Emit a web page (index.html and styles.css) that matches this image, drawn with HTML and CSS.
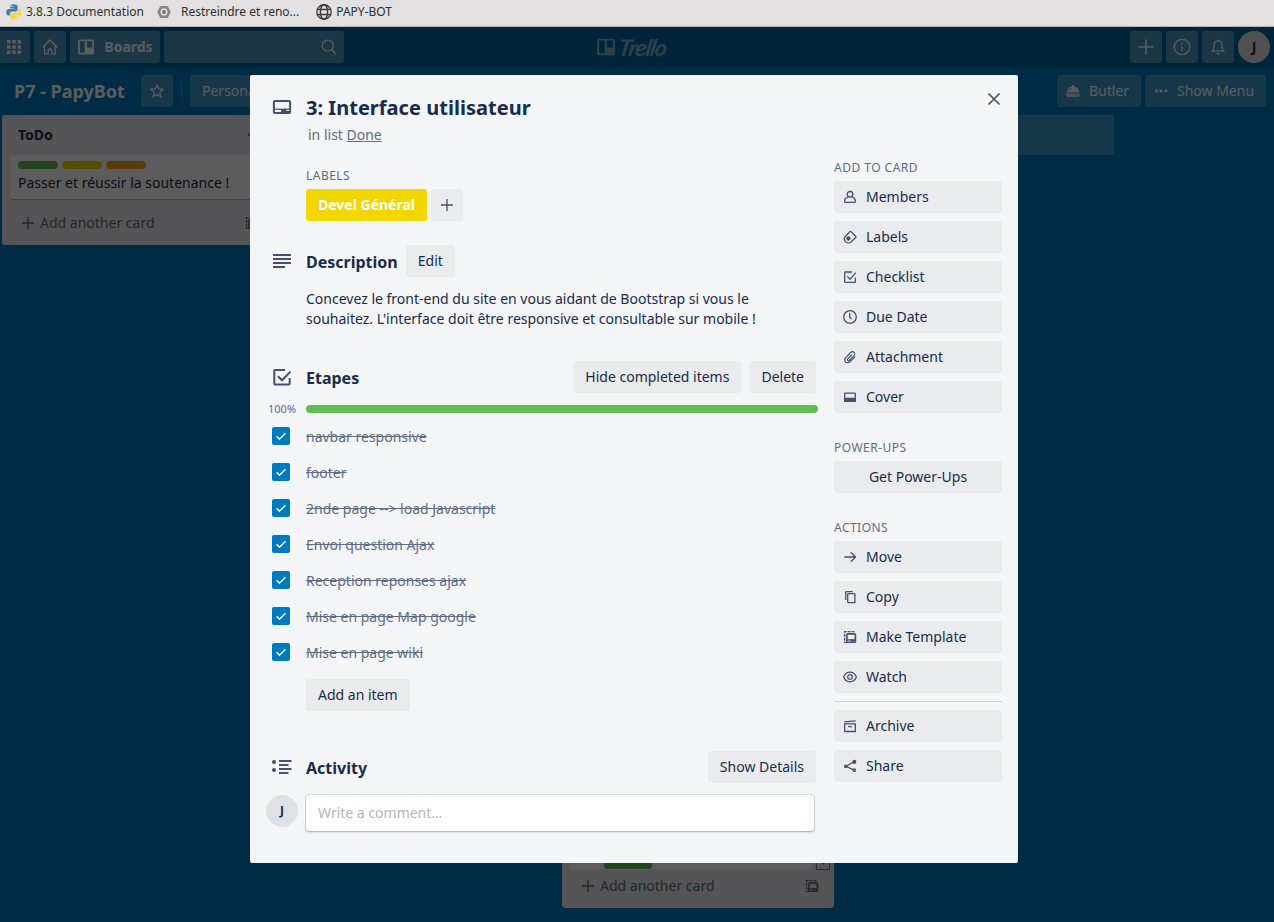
FILE: index.html
```html
<!DOCTYPE html>
<html lang="fr">
<head>
<meta charset="utf-8">
<title>P7 - PapyBot | Trello</title>
<link rel="stylesheet" href="styles.css">
</head>
<body>
<svg class="sprite" aria-hidden="true">
  <symbol id="i-plus" viewBox="0 0 16 16"><path d="M8 2v12M2 8h12"/></symbol>
  <symbol id="i-close" viewBox="0 0 16 16"><path d="M2.500 2.500l11 11M13.500 2.500l-11 11"/></symbol>
  <symbol id="i-member" viewBox="0 0 16 16"><circle cx="8" cy="5.300" r="2.800"/><path d="M5.700 8.100C3.800 8.700 2.700 10 2.700 11.600v.9q0 .9.900.9h8.800q.9 0 .9-.9v-.9c0-1.600-1.100-2.900-3-3.500"/></symbol>
  <symbol id="i-label" viewBox="0 0 16 16"><path d="M7.700 2.700q.7-.6 1.400 0l4.600 4.500q.6.700 0 1.300l-4.400 4.200c-2 1.700-4.700 1.300-6-.200-1.300-1.600-1.200-3.800.3-5.200z"/><circle class="solid" cx="6.400" cy="9.500" r="1.500"/></symbol>
  <symbol id="i-check" viewBox="0 0 16 16"><path d="M10 3H3.300q-.6 0-.6.600v9.200q0 .6.600.600h9.400q.6 0 .6-.600V8.500M5.300 7.400l2.800 2.900 5.700-6.600"/></symbol>
  <symbol id="i-clock" viewBox="0 0 16 16"><circle cx="8" cy="8" r="6.300"/><path d="M7.700 4v4.300l1.800 1.800"/></symbol>
  <symbol id="i-clip" viewBox="0 0 16 16"><path d="M13 7.600L8.200 12.500c-1.500 1.500-3.600 1.500-4.700.3s-1-3.100.4-4.500L8.700 3.500c1-1 2.500-1 3.400-.1s.9 2.300-.1 3.300L7.500 11.200c-.5.5-1.300.5-1.700.1s-.4-1.100.1-1.600L9.900 5.600"/></symbol>
  <symbol id="i-cover" viewBox="0 0 16 16"><rect x="2.700" y="4.100" width="10.600" height="8.200" rx=".7"/><path class="solid" d="M2.700 9.300h10.600v3H2.700z"/></symbol>
  <symbol id="i-arrow" viewBox="0 0 16 16"><path d="M2.300 8h11.200M8.800 3.300L13.500 8l-4.700 4.700"/></symbol>
  <symbol id="i-copy" viewBox="0 0 16 16"><rect x="5.700" y="4.700" width="7.200" height="8.900" rx=".7"/><path d="M3.700 11V3.400q0-.7.700-.7h6.300"/></symbol>
  <symbol id="i-template" viewBox="0 0 16 16"><rect x="4.900" y="4.900" width="8.500" height="8.400" rx=".9" stroke-width="1.600"/><path d="M5 10.900h8.500"/><path class="fill" d="M8.500 10.500h4v2h-4z"/><path class="dash" d="M12.500 2.600H2.600v10.800H5"/></symbol>
  <symbol id="i-eye" viewBox="0 0 16 16"><path d="M1.600 8C3 4.700 5.400 3.200 8 3.200S13 4.700 14.400 8C13 11.300 10.600 12.800 8 12.800S3 11.300 1.600 8z"/><circle cx="8" cy="8" r="2.300"/></symbol>
  <symbol id="i-archive" viewBox="0 0 16 16"><path d="M2.700 5.900h10.600v7.600H2.700zM2.300 3.800l11.400-1M6.200 8.700h3.600"/></symbol>
  <symbol id="i-share" viewBox="0 0 16 16"><path d="M12 4L4 8.300l8 3.800"/><circle class="solid" cx="12.300" cy="3.900" r="1.400"/><circle cx="3.700" cy="8.300" r="1.200"/><circle cx="12.300" cy="12.200" r="1.200"/></symbol>
  <symbol id="i-home" viewBox="0 0 18 18"><path d="M1.800 9.300L9 2l7.200 7.300M3.600 8v7.800h3.700v-3.500q0-1.500 1.700-1.500t1.700 1.500v3.500h3.700V8"/></symbol>
  <symbol id="i-board" viewBox="0 0 18 18"><path class="fill" fill-rule="evenodd" d="M2.500 1.500h13q1.500 0 1.500 1.500v12q0 1.500-1.500 1.500h-13Q1 16.500 1 15V3q0-1.500 1.500-1.500zM2.900 3.200v11.500h4.900V3.200zM10 3.200v6.300h5.200V3.200z"/></symbol>
</svg>

<div class="bookmarks">
  <span class="bookmark python">
    <svg width="16" height="16" viewBox="0 0 16 16"><path fill="#3f7cac" d="M7.800.3C4.600.3 4.300 1.500 4.300 3v1.500h4v.6H2.800C.9 5.100.3 6.700.3 8.300s.6 3.200 2.300 3.200h1.300V9.600c0-1.200 1-2.200 2.200-2.200h3.700c1 0 1.800-.8 1.800-1.800V2.500C11.600 1 10 .3 7.800.3z"/><path fill="#fbd53d" d="M8.200 15.800c3.200 0 3.500-1.200 3.500-2.700v-1.500h-4V11h5.500c1.900 0 2.500-1.600 2.500-3.200S15.100 5 13.400 5h-1.300v1.900c0 1.200-1 2.200-2.200 2.200H6.200c-1 0-1.800.8-1.800 1.800v2.700c0 1.500 1.600 2.200 3.800 2.200z"/><circle cx="5.900" cy="2.200" r=".7" fill="#fff"/><circle cx="10.100" cy="14" r=".7" fill="#fff"/></svg>
    3.8.3 Documentation</span>
  <span class="bookmark cloud">
    <svg width="14" height="14" viewBox="0 0 14 14"><path fill="none" stroke="#858585" stroke-width="2.600" stroke-linejoin="round" d="M4.200 2.200h5.600L12.300 7l-2.500 4.800H4.200L1.700 7z"/><circle cx="7" cy="7" r="2" fill="#777"/></svg>
    Restreindre et reno...</span>
  <span class="bookmark globe">
    <svg width="16" height="16" viewBox="0 0 16 16" fill="none" stroke="#3d3b3c" stroke-width="1.400"><circle cx="8" cy="8" r="7.200"/><ellipse cx="8" cy="8" rx="3.600" ry="7.200"/><path d="M1.500 5.500h13M1.500 10.500h13"/></svg>
    PAPY-BOT</span>
</div>

<div class="app">
  <header class="topbar">
    <div class="hbtn apps"><svg width="14" height="14" viewBox="0 0 14 14"><path class="fill" d="M0 0h3.500v3.500H0zM5.250 0h3.500v3.500h-3.500zM10.500 0H14v3.500h-3.500zM0 5.250h3.500v3.500H0zM5.250 5.250h3.500v3.500h-3.500zM10.500 5.250H14v3.500h-3.500zM0 10.500h3.500V14H0zM5.250 10.500h3.500V14h-3.500zM10.500 10.500H14V14h-3.500z"/></svg></div>
    <div class="hbtn"><svg class="ico" width="18" height="18"><use href="#i-home"/></svg></div>
    <div class="hbtn boards"><svg class="ico" width="18" height="18"><use href="#i-board"/></svg>Boards</div>
    <div class="hbtn search"><svg class="ico" width="16" height="16" viewBox="0 0 16 16"><circle cx="6.800" cy="6.700" r="5.500"/><path d="M10.700 10.700l4.500 4.500"/></svg></div>
    <div class="logo"><svg class="ico" width="20" height="20" viewBox="0 0 18 18"><use href="#i-board"/></svg><span>Trello</span></div>
    <div class="spacer"></div>
    <div class="hbtn"><svg class="ico" width="20" height="20"><use href="#i-plus"/></svg></div>
    <div class="hbtn"><svg class="ico" width="18" height="18" viewBox="0 0 18 18"><circle cx="9" cy="9" r="7.700"/><path d="M9 8v5M9 4.800v1.700"/></svg></div>
    <div class="hbtn"><svg class="ico" width="16" height="16" viewBox="0 0 16 16"><path d="M2.200 12.200c1.300-1.200 1.800-2 1.800-4V5.800a4 4 0 0 1 8 0v2.400c0 2 .5 2.800 1.800 4zM8 .5v1.300"/><path class="fill" d="M6 14h4l-2 2z"/></svg></div>
    <div class="avatar">J</div>
  </header>

  <div class="boardbar">
    <h1>P7 - PapyBot</h1>
    <div class="bbtn star"><svg class="ico" width="14" height="14" viewBox="0 0 14 14"><path d="M7 1l1.800 4 4.300.4-3.200 2.900.9 4.300L7 10.400l-3.800 2.200.9-4.300L.9 5.400 5.200 5z"/></svg></div>
    <i class="divider"></i>
    <div class="bbtn personal">Personal</div>
    <div class="spacer"></div>
    <div class="bbtn butler"><svg width="14" height="12" viewBox="0 0 14 12"><path class="fill" fill-rule="evenodd" d="M6 0h2v1.400C11 1.800 13 4 13.300 7.500H.7C1 4 3 1.800 6 1.400zM2.500 6C3 4.300 4 3.300 5.700 2.800l.2.800C4.500 4.100 3.700 4.900 3.300 6z"/><path class="fill" opacity=".75" d="M0 8.500h14v1L13 12H1L0 9.500z"/></svg>Butler</div>
    <div class="bbtn menu"><svg width="14" height="4" viewBox="0 0 14 4"><path class="fill" d="M1 .6h2.700v2.700H1zM5.700.6h2.700v2.700H5.700zM10.400.6h2.700v2.700h-2.700z"/></svg>Show Menu</div>
  </div>

  <div class="lists">
    <section class="list">
      <div class="list-head"><h2>ToDo</h2><svg width="14" height="4" viewBox="0 0 14 4"><path class="fill" d="M1 .6h2.700v2.700H1zM5.700.6h2.700v2.700H5.700zM10.400.6h2.700v2.700h-2.700z"/></svg></div>
      <article class="card">
        <div class="tags"><i class="green"></i><i class="yellow"></i><i class="orange"></i></div>
        Passer et réussir la soutenance !
      </article>
      <div class="add-card"><svg class="ico" width="16" height="16"><use href="#i-plus"/></svg>Add another card<svg class="ico tpl" width="16" height="16"><use href="#i-template"/></svg></div>
    </section>
    <section class="list gap"></section>
    <section class="list tall">
      <div class="stack"><div class="last-card"><i class="green"></i></div><div class="scroll">▾</div></div>
      <div class="add-card"><svg class="ico" width="16" height="16"><use href="#i-plus"/></svg>Add another card<svg class="ico tpl" width="16" height="16"><use href="#i-template"/></svg></div>
    </section>
    <div class="new-list"></div>
  </div>
</div>

<div class="overlay">
  <div class="dialog" role="dialog">
    <svg class="ico close" width="16" height="16"><use href="#i-close"/></svg>
    <div class="title-row">
      <svg class="ico head-ico" width="20" height="16" viewBox="0 0 20 16"><rect x="1.900" y="1.900" width="16.200" height="12.200" rx="1.200"/><path class="thin" d="M2 10.200h16"/><path class="fill" d="M9 10h5.500v2H18v2H9z"/></svg>
      <div><h2>3: Interface utilisateur</h2><p>in list <a>Done</a></p></div>
    </div>
    <div class="columns">
      <main>
        <div class="labels"><h4>LABELS</h4><div class="row"><span class="chip">Devel Général</span><span class="btn square"><svg class="ico" width="16" height="16"><use href="#i-plus"/></svg></span></div></div>

        <div class="head description">
          <svg class="ico head-ico" width="20" height="16" viewBox="0 0 20 16"><path d="M1 1.900h18M1 5.900h18M1 9.900h18M1 13.900h12"/></svg>
          <h3>Description</h3><span class="btn">Edit</span>
        </div>
        <p class="text">Concevez le front-end du site en vous aidant de Bootstrap si vous le souhaitez. L'interface doit être responsive et consultable sur mobile !</p>

        <div class="head">
          <svg class="ico head-ico" width="20" height="18" viewBox="0 0 20 18"><path d="M13 2H3.200q-.9 0-.9.900v12.600q0 .9.900.9h13.600q.9 0 .9-.9V10M6 8.300l4 4 8.500-8.700"/></svg>
          <h3>Etapes</h3><div class="spacer"></div><span class="btn">Hide completed items</span><span class="btn">Delete</span>
        </div>
        <div class="progress"><span>100%</span><div class="track"></div></div>
        <ul class="items">
          <li><i class="box"><svg width="12" height="12" viewBox="0 0 12 12"><path d="M1.500 6.300l3 3 6-6"/></svg></i><s>navbar responsive</s></li>
          <li><i class="box"><svg width="12" height="12" viewBox="0 0 12 12"><path d="M1.500 6.300l3 3 6-6"/></svg></i><s>footer</s></li>
          <li><i class="box"><svg width="12" height="12" viewBox="0 0 12 12"><path d="M1.500 6.300l3 3 6-6"/></svg></i><s>2nde page --&gt; load Javascript</s></li>
          <li><i class="box"><svg width="12" height="12" viewBox="0 0 12 12"><path d="M1.500 6.300l3 3 6-6"/></svg></i><s>Envoi question Ajax</s></li>
          <li><i class="box"><svg width="12" height="12" viewBox="0 0 12 12"><path d="M1.500 6.300l3 3 6-6"/></svg></i><s>Reception reponses ajax</s></li>
          <li><i class="box"><svg width="12" height="12" viewBox="0 0 12 12"><path d="M1.500 6.300l3 3 6-6"/></svg></i><s>Mise en page Map google</s></li>
          <li><i class="box"><svg width="12" height="12" viewBox="0 0 12 12"><path d="M1.500 6.300l3 3 6-6"/></svg></i><s>Mise en page wiki</s></li>
        </ul>
        <span class="btn add-item">Add an item</span>

        <div class="head activity">
          <svg class="ico head-ico" width="20" height="16" viewBox="0 0 20 16"><path d="M7 2h12.500M7 6h9.500M7 10h12.500M7 14h9.500"/><circle class="fill" cx="2" cy="3" r="2"/><circle class="fill" cx="2" cy="11" r="2"/></svg>
          <h3>Activity</h3><div class="spacer"></div><span class="btn">Show Details</span>
        </div>
        <div class="comment"><div class="avatar">J</div><div class="input">Write a comment…</div></div>
      </main>

      <aside>
        <h4>ADD TO CARD</h4>
        <span class="btn side"><svg class="ico" width="16" height="16"><use href="#i-member"/></svg>Members</span>
        <span class="btn side"><svg class="ico" width="16" height="16"><use href="#i-label"/></svg>Labels</span>
        <span class="btn side"><svg class="ico" width="16" height="16"><use href="#i-check"/></svg>Checklist</span>
        <span class="btn side"><svg class="ico" width="16" height="16"><use href="#i-clock"/></svg>Due Date</span>
        <span class="btn side"><svg class="ico clip" width="16" height="16"><use href="#i-clip"/></svg>Attachment</span>
        <span class="btn side"><svg class="ico" width="16" height="16"><use href="#i-cover"/></svg>Cover</span>
        <h4 class="next">POWER-UPS</h4>
        <span class="btn side center">Get Power-Ups</span>
        <h4 class="next">ACTIONS</h4>
        <span class="btn side"><svg class="ico" width="16" height="16"><use href="#i-arrow"/></svg>Move</span>
        <span class="btn side"><svg class="ico" width="16" height="16"><use href="#i-copy"/></svg>Copy</span>
        <span class="btn side"><svg class="ico" width="16" height="16"><use href="#i-template"/></svg>Make Template</span>
        <span class="btn side"><svg class="ico" width="16" height="16"><use href="#i-eye"/></svg>Watch</span>
        <hr>
        <span class="btn side"><svg class="ico" width="16" height="16"><use href="#i-archive"/></svg>Archive</span>
        <span class="btn side"><svg class="ico" width="16" height="16"><use href="#i-share"/></svg>Share</span>
      </aside>
    </div>
  </div>
</div>
</body>
</html>
```
FILE: styles.css
```css
* { box-sizing: border-box; }
body { margin: 0; height: 922px; overflow: hidden; font: 14px/20px "Noto Sans", sans-serif; color: #172b4d; background: #0079bf; display: flex; flex-direction: column; }
h1, h2, h3, h4, p, ul { margin: 0; padding: 0; }
.sprite { display: none; }
.spacer { flex: 1; }
.ico { fill: none; stroke: currentColor; stroke-width: 1.3; flex: none; }
.solid, .fill { fill: currentColor; }
.fill { stroke: none; }
.dash { stroke-dasharray: 3 1; }
svg { flex: none; display: block; }

/* Browser bookmarks bar */
.bookmarks { height: 27px; flex: none; background: #e2e0e1; border-bottom: 1px solid #b5b3b4; display: flex; align-items: center; padding: 0 0 3px 6px; font-size: 12px; color: #303030; white-space: nowrap; }
.bookmark { display: flex; align-items: center; gap: 4px; }
.cloud { margin-left: 13px; gap: 10px; }
.globe { margin-left: 17px; }

/* Board */
.app { flex: 1; min-height: 0; display: flex; flex-direction: column; }
.topbar { height: 40px; flex: none; background: rgba(0,0,0,.15); display: flex; gap: 4px; padding: 4px 4px 4px 0; color: #fff; position: relative; }
.hbtn { height: 32px; width: 32px; border-radius: 3px; background: rgba(255,255,255,.3); display: flex; align-items: center; justify-content: center; }
.apps { width: 30px; border-radius: 0 3px 3px 0; padding-right: 2px; }
.boards { width: 90px; gap: 9px; font-weight: 700; }
.search { width: 180px; justify-content: flex-end; padding-right: 7px; }
.avatar { width: 32px; height: 32px; border-radius: 50%; background: #dfe1e6; color: #172b4d; font-weight: 700; font-size: 12px; display: flex; align-items: center; justify-content: center; flex: none; }
.topbar .avatar { font-size: 14px; }
.logo { position: absolute; left: 596px; top: 10px; display: flex; align-items: center; gap: 3px; height: 20px; opacity: .5; font: italic 700 23px/20px Lato, sans-serif; letter-spacing: -.9px; }
.logo span { transform: skewX(-10deg); }
.boardbar { height: 48px; flex: none; padding: 8px; display: flex; color: #fff; align-items: center; }
.boardbar h1 { font-size: 18px; line-height: 32px; padding-left: 6px; width: 133px; white-space: nowrap; }
.bbtn { height: 32px; border-radius: 3px; background: rgba(255,255,255,.24); display: flex; align-items: center; white-space: nowrap; }
.star { width: 32px; justify-content: center; }
.divider { width: 1px; height: 16px; background: rgba(255,255,255,.24); margin: 0 8px; }
.personal { padding: 0 12px; }
.butler { width: 84px; gap: 9px; padding-left: 9px; margin-right: 4px; }
.menu { width: 121px; gap: 9px; padding-left: 9px; }
.lists { flex: 1; min-height: 0; display: flex; align-items: flex-start; gap: 8px; padding-left: 2px; }
.list { width: 272px; flex: none; border-radius: 3px; background: #ebecf0; }
.gap { height: 600px; }
.list-head { height: 40px; padding: 0 13px 0 16px; display: flex; align-items: center; justify-content: space-between; color: #6b778c; }
.list-head h2 { font-size: 14px; color: #172b4d; }
.card { margin: 0 8px; height: 44px; background: #fff; border-radius: 3px; box-shadow: 0 1px 0 rgba(9,30,66,.25); padding: 6px 8px; }
.tags { display: flex; gap: 4px; margin-bottom: 4px; }
.tags i { width: 40px; height: 8px; border-radius: 4px; }
.green { background: #61bd4f; }
.yellow { background: #f2d600; }
.orange { background: #ff9f1a; }
.add-card { height: 46px; display: flex; align-items: center; padding: 2px 14px 0 18px; gap: 4px; color: #5e6c84; }
.tpl { margin-left: auto; }
.tall { height: 793px; display: flex; flex-direction: column; justify-content: flex-end; }
.tall .add-card { height: 38px; padding-top: 0; padding-bottom: 6px; }
.stack { height: 16px; display: flex; margin: 0 4px 0 8px; gap: 4px; }
.last-card { flex: 1; background: #fff; padding-left: 34px; }
.last-card i { display: block; width: 48px; height: 15px; border-radius: 0 0 4px 4px; }
.scroll { width: 14px; border: 1px solid #777; font-size: 9px; line-height: 14px; text-align: center; }
.new-list { width: 272px; height: 40px; border-radius: 3px; background: rgba(255,255,255,.24); }

/* Card dialog */
.overlay { position: absolute; left: 0; top: 27px; width: 1274px; height: 895px; padding-top: 48px; background: rgba(0,0,0,.64); }
.dialog { position: relative; width: 768px; height: 788px; margin-left: 250px; background: #f4f5f7; border-radius: 2px; padding: 21px 16px 0; }
.dialog .ico { color: #42526e; }
.close { position: absolute; right: 16px; top: 16px; stroke-width: 1.700; }
.title-row { display: flex; }
.title-row > div { margin-left: 14px; }
.title-row .head-ico { margin-top: 3px; }
.title-row h2 { font-size: 20px; line-height: 24px; letter-spacing: .03px; }
.title-row p { padding-left: 2px; margin-top: 5px; color: #5e6c84; }
.title-row a { text-decoration: underline; }
.dialog .head-ico { margin-left: 6px; stroke-width: 2; }
.thin { stroke-width: 1.200; }
h4 { font-size: 12px; line-height: 20px; height: 20px; padding-top: 1px; font-weight: 400; letter-spacing: .48px; color: #5e6c84; }
.columns { display: flex; justify-content: space-between; }
main { width: 552px; padding-top: 20px; }
aside { width: 168px; padding-top: 12px; }
.labels { margin-left: 40px; }
.row { display: flex; gap: 4px; margin-top: 4px; }
.chip, .btn { height: 32px; line-height: 32px; border-radius: 3px; padding: 0 12px; white-space: nowrap; }
.chip { background: #f2d600; color: #fff; font-weight: 700; }
.btn { background: #eaebee; display: flex; align-items: center; }
.square { width: 32px; padding: 0; justify-content: center; }
.head { display: flex; align-items: center; height: 32px; margin-top: 32px; padding-right: 2px; gap: 8px; }
.head h3 { font-size: 16px; line-height: 20px; margin-left: 6px; padding-top: 2px; }
.description { margin-top: 24px; }
.text { margin: 12px 40px 0 40px; }
.progress { display: flex; align-items: center; height: 18px; margin: 7px 0 6px; }
.progress span { width: 40px; padding-left: 2px; font-size: 11px; color: #5e6c84; }
.track { height: 8px; flex: 1; border-radius: 4px; background: #61bd4f; }
.items { list-style: none; }
.items li { height: 36px; display: flex; align-items: flex-start; color: #5e6c84; padding-top: 3px; }
.box { width: 18px; height: 18px; border-radius: 2px; background: #0079bf; margin: 0 16px 0 6px; display: flex; align-items: center; justify-content: center; }
.box svg { fill: none; stroke: #fff; stroke-width: 1.400; }
.add-item { width: 104px; margin: 3px 0 0 40px; }
.activity { margin-top: 40px; }
.comment { display: flex; margin-top: 12px; }
.input { width: 508px; height: 36px; margin-left: 8px; border-radius: 3px; background: #fff; padding: 8px 12px; color: #b0b6c2; box-shadow: 0 1px 2px rgba(9,30,66,.25), 0 0 0 1px rgba(9,30,66,.1); }
.side { margin: 4px 0 8px; padding: 0 8px; gap: 8px; }
.dialog .clip { stroke-width: 1.100; }
.center { justify-content: center; }
.next { margin-top: 24px; }
hr { border: 0; height: 1px; background: #d2d4d9; margin: 8px 0; }
hr + .side { margin-top: 8px; }
.side + .side { margin-top: 8px; }
```
